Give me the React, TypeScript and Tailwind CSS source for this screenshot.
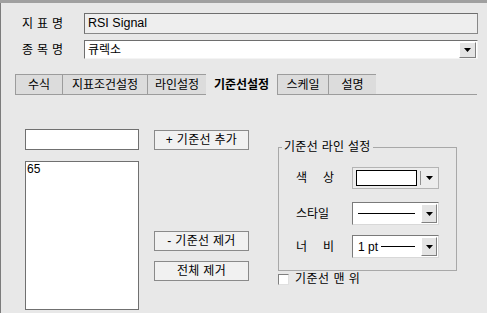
const font = "font-['Liberation_Sans','Noto_Sans_CJK_KR',sans-serif]"

function Arrow() {
  return (
    <svg width="7" height="4" viewBox="0 0 7 4" className="block">
      <polygon points="0,0 7,0 3.5,4" fill="#000" />
    </svg>
  )
}

function DropButton({ className = '' }: { className?: string }) {
  return (
    <div
      className={`flex items-center justify-center bg-[#e4e4e4] border border-t-white border-l-white border-b-[#808080] border-r-[#808080] ${className}`}
    >
      <Arrow />
    </div>
  )
}

function Button({ label }: { label: string }) {
  return (
    <button className="w-[95px] h-[20px] flex items-center justify-center bg-[#f1f1f1] border border-[#8a8a8a] text-[12px] text-black leading-none tracking-[0.3px]">
      {label}
    </button>
  )
}

const tabs = [
  { label: '수식', w: 'w-[47px]' },
  { label: '지표조건설정', w: 'w-[85px]' },
  { label: '라인설정', w: 'w-[59px]' },
  { label: '기준선설정', w: 'w-[71px]', active: true },
  { label: '스케일', w: 'w-[51px]' },
  { label: '설명', w: 'w-[48px]' },
]

function LineCombo({ text }: { text?: string }) {
  return (
    <div className="w-[87px] h-[23px] flex items-center bg-white border border-t-[#7a7a7a] border-l-[#7a7a7a] border-b-[#d8d8d8] border-r-[#d8d8d8]">
      <div className="flex-1 flex items-center pl-[5px] pr-[6px] gap-[3px]">
        {text && <span className="text-[12px] leading-none">{text}</span>}
        <div className="flex-1 h-px bg-black" />
      </div>
      <DropButton className="w-[16px] h-[19px] mr-[1px]" />
    </div>
  )
}

function SpacedLabel({ chars, w }: { chars: string[]; w: string }) {
  return (
    <div className={`${w} flex justify-between text-[12px] leading-none`}>
      {chars.map((c) => (
        <span key={c}>{c}</span>
      ))}
    </div>
  )
}

export default function App() {
  return (
    <div className={`w-[487px] h-[313px] overflow-hidden bg-[#e8e8e8] text-black ${font} flex flex-col`}>
      <div className="h-[3px] bg-[#a0a0a0] shrink-0" />
      <div className="flex-1 flex flex-col border-l border-[#7c7c7c]">
        {/* 지표명 */}
        <div className="flex items-center pl-[21px] pt-[10px]">
          <div className="w-[62px]">
            <SpacedLabel chars={['지', '표', '명']} w="w-[41px]" />
          </div>
          <div className="w-[394px] h-[21px] flex items-center pl-[3px] bg-[#eeeeee] border border-[#888888] border-t-[#6e6e6e] border-l-[#6e6e6e] text-[12.5px]">
            RSI Signal
          </div>
        </div>
        {/* 종목명 */}
        <div className="flex items-center pl-[21px] mt-[6px]">
          <div className="w-[62px]">
            <SpacedLabel chars={['종', '목', '명']} w="w-[41px]" />
          </div>
          <div className="w-[394px] h-[19px] flex items-center bg-white border border-t-[#6e6e6e] border-l-[#6e6e6e] border-b-[#f4f4f4] border-r-[#f4f4f4]">
            <span className="flex-1 pl-[3px] text-[12px] leading-none">큐렉소</span>
            <DropButton className="w-[17px] h-[16px] mr-[1px]" />
          </div>
        </div>
        {/* tabs */}
        <div className="flex pl-[14px] mt-[15px] h-[21px]">
          {tabs.map((t) =>
            t.active ? (
              <div
                key={t.label}
                className={`${t.w} h-full flex items-center justify-center text-[12px] font-bold leading-none`}
              >
                {t.label}
              </div>
            ) : (
              <div
                key={t.label}
                className={`${t.w} h-full flex items-center justify-center text-[12px] leading-none bg-[#dcdcdc] border-t border-l border-b border-[#9c9c9c] last:border-r`}
              >
                {t.label}
              </div>
            )
          )}
          <div className="w-[101px] h-full border-b border-[#9c9c9c]" />
        </div>
        {/* content */}
        <div className="flex pl-[24px]">
          <div className="w-[114px] flex flex-col mt-[34px]">
            <div className="h-[21px] bg-white border border-[#707070]" />
            <div className="h-[149px] mt-[11px] bg-white border border-[#707070] pl-[1px] text-[12px] leading-[14px]">
              65
            </div>
          </div>
          <div className="ml-[15px] flex flex-col mt-[35px]">
            <Button label="+ 기준선 추가" />
            <div className="mt-[81px]">
              <Button label="- 기준선 제거" />
            </div>
            <div className="mt-[10px]">
              <Button label="전체 제거" />
            </div>
          </div>
          <div className="ml-[29px] mt-[45px] flex flex-col">
            <fieldset className="w-[179px] h-[131px] border border-[#a8a8a8] pl-[17px] pr-[17px] pt-[13px]">
              <legend className="ml-[-14px] px-[2px] text-[12px] leading-[14px] tracking-[0.3px]">기준선 라인 설정</legend>
              <div className="flex items-center">
                <div className="w-[56px]">
                  <SpacedLabel chars={['색', '상']} w="w-[38px]" />
                </div>
                <div className="w-[87px] h-[22px] flex items-center border border-[#b4b4b4] bg-[#ececec]">
                  <div className="ml-[3px] w-[61px] h-[16px] bg-white border border-black" />
                  <div className="ml-[3px] w-px h-[14px] bg-[#909090]" />
                  <div className="ml-[5px]">
                    <Arrow />
                  </div>
                </div>
              </div>
              <div className="flex items-center mt-[13px]">
                <div className="w-[56px] text-[12px] leading-none">스타일</div>
                <LineCombo />
              </div>
              <div className="flex items-center mt-[10px]">
                <div className="w-[56px]">
                  <SpacedLabel chars={['너', '비']} w="w-[38px]" />
                </div>
                <LineCombo text="1 pt" />
              </div>
            </fieldset>
            <label className="flex items-center mt-[2px] gap-[6px] text-[12px] leading-none tracking-[0.5px]">
              <span className="w-[11px] h-[11px] bg-white border border-t-[#808080] border-l-[#808080] border-b-[#e0e0e0] border-r-[#e0e0e0]" />
              기준선 맨 위
            </label>
          </div>
        </div>
      </div>
    </div>
  )
}
